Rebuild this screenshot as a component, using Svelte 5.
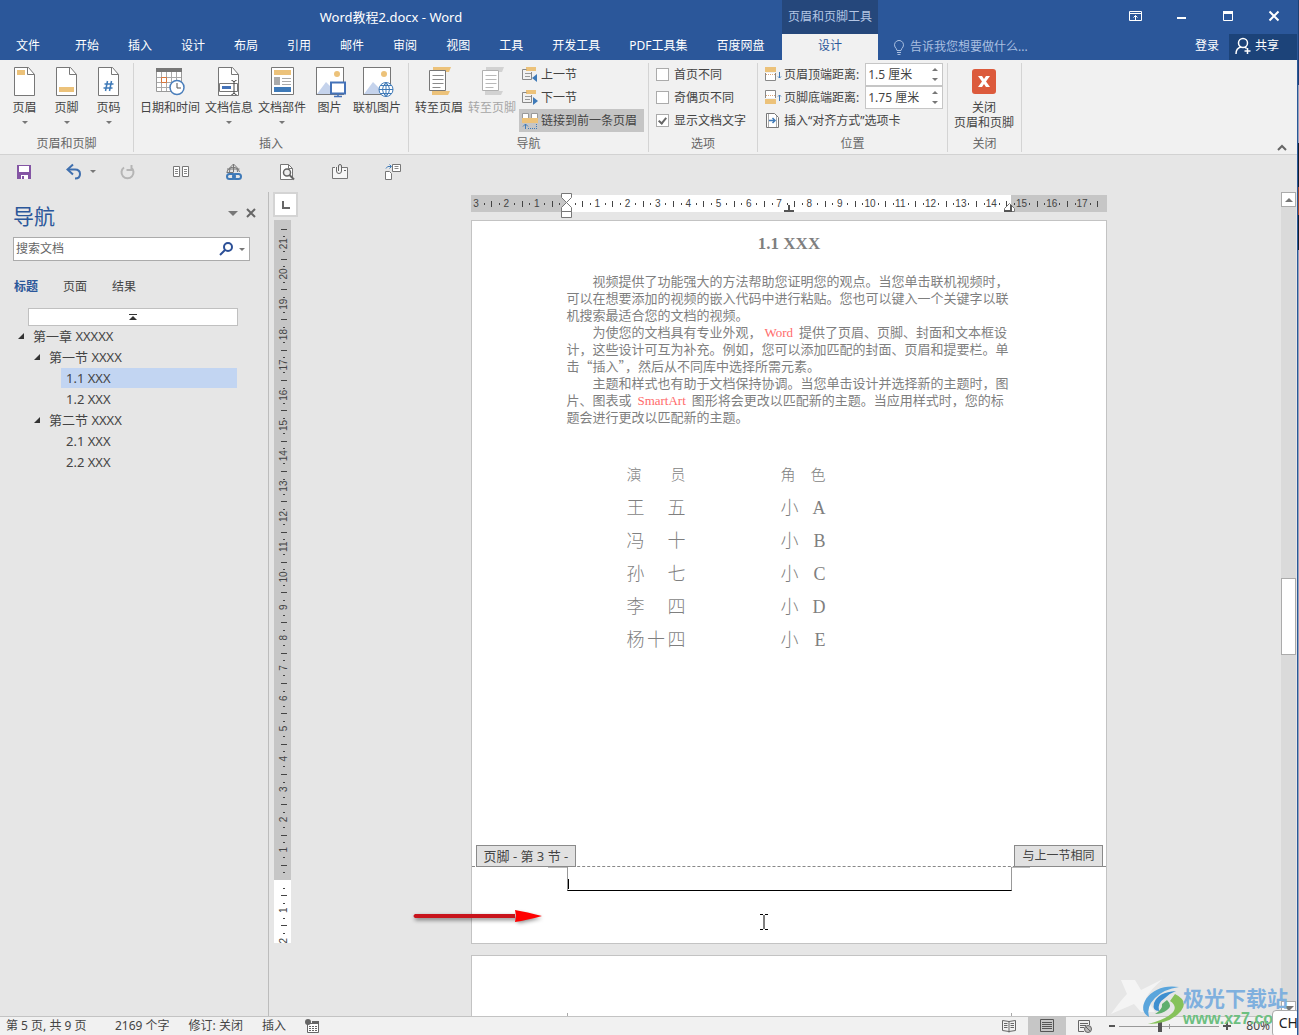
<script>
    const tabs = ["开始", "插入", "设计", "布局", "引用", "邮件", "审阅", "视图", "工具", "开发工具", "PDF工具集", "百度网盘"];

    const headerButtons = [
        { icon: "header", label: "页眉", menu: true },
        { icon: "footer", label: "页脚", menu: true },
        { icon: "number", label: "页码", menu: true }
    ];

    const insertButtons = [
        { icon: "date", label: "日期和时间" },
        { icon: "info", label: "文档信息", menu: true },
        { icon: "parts", label: "文档部件", menu: true },
        { icon: "picture", label: "图片" },
        { icon: "online", label: "联机图片" }
    ];

    const outline = [
        { level: 0, text: "第一章 XXXXX", open: true },
        { level: 1, text: "第一节 XXXX", open: true },
        { level: 2, text: "1.1 XXX" },
        { level: 2, text: "1.2 XXX" },
        { level: 1, text: "第二节 XXXX", open: true },
        { level: 2, text: "2.1 XXX" },
        { level: 2, text: "2.2 XXX" }
    ];

    const cast = [
        ["王 五", "小 A"],
        ["冯 十", "小 B"],
        ["孙 七", "小 C"],
        ["李 四", "小 D"],
        ["杨十四", "小 E"]
    ];

    // One centimetre on the rulers at 80% zoom
    const CM = 30.3;

    // Quarter marks between two bounds, zero is where the margin ends
    function ticks(from, to, zero) {
        const list = [];
        for (let q = from * 4; q <= to * 4; q++) {
            if (q === 0) continue;
            const kind = q % 4 === 0 ? "label" : q % 2 === 0 ? "bar" : "dot";
            list.push({ kind, at: zero + (q * CM) / 4, text: Math.abs(q / 4) });
        }
        return list;
    }

    const across = ticks(-3, 17.5, 96);
    const down = ticks(-21.5, 2, 660);

    let selected = $state(2);
    let differentFirst = $state(false);
    let differentOdd = $state(false);
    let showText = $state(true);
    let zoom = $state(80);
</script>

{#snippet page()}
    <path d="M3.5 1.5h14l6 7v21h-20z" fill="#fff" stroke="#777" />
    <path d="M16.5 1.5v7h7" fill="none" stroke="#777" />
{/snippet}

{#snippet photo()}
    <rect x="0.5" y="1.5" width="27" height="27" fill="#fff" stroke="#777" />
    <circle cx="21" cy="8" r="3" fill="#ecc27a" />
    <path d="M1 28l9-12 12 12z" fill="#c5d3ec" />
{/snippet}

{#snippet bigIcon(name)}
    <svg class="big-icon" viewBox="0 0 28 32" aria-hidden="true">
        {#if name === "header"}
            {@render page()}
            <path d="M6 4h8v5H6z" fill="#ecc27a" />
        {:else if name === "footer"}
            {@render page()}
            <path d="M6 21h15v5H6z" fill="#ecc27a" />
        {:else if name === "number"}
            {@render page()}
            <path d="M12.500 15l-2 10M16.500 15l-2 10M9.500 18h9M8.500 22h9" fill="none" stroke="#3f7ab8" stroke-width="1.500" />
        {:else if name === "date"}
            <path d="M0.500 2.500h25v23h-25z" fill="#fff" stroke="#999" />
            <path d="M0 2h26v4H0z" fill="#777" />
            <path d="M5.500 6v19M10.500 6v19M15.500 6v19M20.500 6v19M1 11.500h24M1 16.500h24M1 21.500h24" stroke="#aaa" />
            <path d="M5.500 11.500h5v5h-5z" fill="none" stroke="#d9773c" />
            <circle cx="21" cy="21.500" r="7" fill="#fff" stroke="#4a7ebb" stroke-width="1.500" />
            <path d="M21 17v5h4" fill="none" stroke="#555" />
        {:else if name === "info"}
            {@render page()}
            <path d="M4.500 17.500h18v8h-18z" fill="#fff" stroke="#777" />
            <path d="M7 20h9v3H7z" fill="#4472b8" />
            <path d="M16.500 14.500q2 0 2.500 1.500q.5-1.500 2.500-1.500M19 16v11M16.500 28.500q2 0 2.500-1.500q.5 1.500 2.500 1.500" fill="none" stroke="#444" />
        {:else if name === "parts"}
            <path d="M3.500 1.500h22v27h-22z" fill="#fff" stroke="#777" />
            <path d="M6 4h17v5H6z" fill="#ecc27a" />
            <path d="M6 11h6v8H6z" fill="#aaa" />
            <path d="M14 12.500h9M14 15.500h9M14 18.500h9" stroke="#aaa" />
            <path d="M6 21h17v5H6z" fill="#3f7ab8" />
        {:else if name === "picture"}
            {@render photo()}
            <path d="M15 16.500h14v11H15z" fill="#fff" stroke="#4472b8" stroke-width="2" />
            <path d="M22 28v2M18 30.500h8" stroke="#4472b8" stroke-width="1.500" />
        {:else if name === "online"}
            {@render photo()}
            <circle cx="23" cy="23.500" r="7" fill="#fff" stroke="#3f7ab8" />
            <path d="M16 23.500h14M23 16.500v14M17.500 19.500h11M17.500 27.500h11M23 16.500q-7 7 0 14q7-7 0-14" fill="none" stroke="#3f7ab8" />
        {:else if name === "goHeader" || name === "goFooter"}
            {@const off = name === "goFooter"}
            <path d="M8 1h18l-2 5H8zM7 25h18l-2 4H7z" fill={off ? "#d2d2d2" : "#ecc27a"} />
            <path d="M4.500 4.500h16v20h-16z" fill="#fff" stroke={off ? "#b0b0b0" : "#777"} />
            <path d="M7.500 9.500h11M7.500 13.500h11M7.500 17.500h11M7.500 21.500h8" stroke={off ? "#b8b8b8" : "#8a8a8a"} />
        {:else if name === "close"}
            <rect x="2" y="3" width="24" height="25" rx="3" fill="#dc5a3c" />
            <path d="M8 10h4l2 3 2-3h4l-4 5.500 4 5.500h-4l-2-3-2 3H8l4-5.500z" fill="#fff" />
        {/if}
    </svg>
{/snippet}

{#snippet bigButton(icon, label, menu, disabled)}
    <button type="button" class="big" {disabled}>
        {@render bigIcon(icon)}
        <span>{label}</span>
        {#if menu}<i class="caret"></i>{/if}
    </button>
{/snippet}

{#snippet smallIcon(name)}
    <svg class="small-icon" viewBox="0 0 16 16" aria-hidden="true">
        {#if name === "prev" || name === "next"}
            <path d="M4 0h10v4H4z" fill="#ecc27a" />
            <path d="M4.500 2.500H.5v10h9V5" fill="none" stroke="#888" />
            <path d="M3 6.500h6M3 9.500h5" stroke="#999" />
            <path d={name === "prev" ? "M15 7v8l-5-4z" : "M11 7v8l5-4z"} fill="#3f7ab8" />
        {:else if name === "link"}
            <path d="M.5.5h6v5h-6zM9.500.5h6v5h-6z" fill="#fff" stroke="#999" />
            <path d="M0 5h16v5H0z" fill="#ecc27a" />
            <path d="M3.500 16v-5M1 13.500l2.500-2.500 2.500 2.500" fill="none" stroke="#3f7ab8" />
            <path d="M6 15.500h9M14.500 11v4" stroke="#3f7ab8" stroke-dasharray="1 1" />
        {:else if name === "top" || name === "bottom"}
            <path d={name === "top" ? "M.5 6v7.500h10V6" : "M.5 8V.5h10V8"} fill="#fff" stroke="#888" />
            <path d={name === "top" ? "M0 0h11v5H0z" : "M0 9h11v5H0z"} fill="#ecc27a" />
            <path d={name === "top" ? "M1 7.500h9" : "M1 5.500h9"} stroke="#d9a57c" stroke-dasharray="1 1" />
            <path d={name === "top" ? "M14.500 5v6M13 9.500l1.500 1.500 1.500-1.500" : "M14.500 11V5M13 6.500l1.500-1.500 1.500 1.500"} fill="none" stroke="#3f7ab8" />
        {:else if name === "align"}
            <path d="M1.500.5h8l4 4v10h-12z" fill="#fff" stroke="#777" />
            <path d="M3.500 1v13M11.500 3v11" stroke="#aaa" />
            <path d="M4 7.500h6M7.500 5l2.500 2.500-2.500 2.500" fill="none" stroke="#3f7ab8" stroke-width="1.500" />
        {/if}
    </svg>
{/snippet}

<div class="app">
    <header>
        <div class="title">Word教程2.docx - Word</div>
        <div class="context">页眉和页脚工具</div>
        <div class="window">
            <button type="button" aria-label="功能区显示选项">
                <svg viewBox="0 0 14 14"><path d="M.5 2.500h12v9H.5zM.5 4.500h12M6.500 11V6.500M4.500 8.500l2-2 2 2" fill="none" stroke="#fff" /></svg>
            </button>
            <button type="button" aria-label="最小化">
                <svg viewBox="0 0 14 14"><path d="M2 8h9v2H2z" fill="#fff" /></svg>
            </button>
            <button type="button" aria-label="最大化">
                <svg viewBox="0 0 14 14"><path d="M2.500 2.500h9v9h-9z" fill="none" stroke="#fff" /><path d="M2 2h10v3H2z" fill="#fff" /></svg>
            </button>
            <button type="button" aria-label="关闭窗口">
                <svg viewBox="0 0 14 14"><path d="M2.500 2.500l9 9M11.500 2.500l-9 9" stroke="#fff" stroke-width="2" /></svg>
            </button>
        </div>
        <nav class="tabs">
            <button type="button" class="file">文件</button>
            {#each tabs as tab}
                <button type="button">{tab}</button>
            {/each}
        </nav>
        <button type="button" class="active-tab">设计</button>
        <div class="account">
            <button type="button" class="tell">
                <svg viewBox="0 0 12 16"><path d="M4 11.500Q3.500 9.500 2 8A4.500 4.500 0 1 1 10 8Q8.500 9.500 8 11.500zM4 13.500h4M4.500 15.500h3" fill="none" stroke="#a9bfe0" /></svg>
                告诉我您想要做什么...
            </button>
            <button type="button" class="login">登录</button>
            <button type="button" class="share">
                <svg viewBox="0 0 16 18"><circle cx="8" cy="6" r="4.500" fill="none" stroke="#fff" stroke-width="1.500" /><path d="M1 17q0-6 5-7M10 10l1.500 1.500M12.500 11v6M9.500 14h6" fill="none" stroke="#fff" stroke-width="1.500" /></svg>
                共享
            </button>
        </div>
    </header>

    <div class="ribbon">
        <section>
            <div class="tools">
                {#each headerButtons as b}
                    {@render bigButton(b.icon, b.label, b.menu)}
                {/each}
            </div>
            <h2>页眉和页脚</h2>
        </section>
        <section>
            <div class="tools">
                {#each insertButtons as b}
                    {@render bigButton(b.icon, b.label, b.menu)}
                {/each}
            </div>
            <h2>插入</h2>
        </section>
        <section>
            <div class="tools">
                {@render bigButton("goHeader", "转至页眉", false)}
                {@render bigButton("goFooter", "转至页脚", false, true)}
                <div class="stack">
                    <button type="button">{@render smallIcon("prev")}上一节</button>
                    <button type="button">{@render smallIcon("next")}下一节</button>
                    <button type="button" class="pressed">{@render smallIcon("link")}链接到前一条页眉</button>
                </div>
            </div>
            <h2>导航</h2>
        </section>
        <section>
            <div class="tools stack">
                <label><input type="checkbox" bind:checked={differentFirst} />首页不同</label>
                <label><input type="checkbox" bind:checked={differentOdd} />奇偶页不同</label>
                <label><input type="checkbox" bind:checked={showText} />显示文档文字</label>
            </div>
            <h2>选项</h2>
        </section>
        <section>
            <div class="tools stack position">
                <div class="field">
                    {@render smallIcon("top")}
                    <label for="top">页眉顶端距离:</label>
                    <span class="spin"><input id="top" value="1.5 厘米" /><span><i class="up"></i><i class="caret"></i></span></span>
                </div>
                <div class="field">
                    {@render smallIcon("bottom")}
                    <label for="bottom">页脚底端距离:</label>
                    <span class="spin"><input id="bottom" value="1.75 厘米" /><span><i class="up"></i><i class="caret"></i></span></span>
                </div>
                <button type="button">{@render smallIcon("align")}插入“对齐方式”选项卡</button>
            </div>
            <h2>位置</h2>
        </section>
        <section>
            <div class="tools">
                <button type="button" class="big">
                    {@render bigIcon("close")}
                    <span>关闭<br />页眉和页脚</span>
                </button>
            </div>
            <h2>关闭</h2>
        </section>
        <button type="button" class="collapse" aria-label="折叠功能区">
            <svg viewBox="0 0 10 8"><path d="M1 7l4-4 4 4" fill="none" stroke="#666" stroke-width="2" /></svg>
        </button>
    </div>

    <div class="quick">
        <button type="button" aria-label="保存">
            <svg viewBox="0 0 18 18"><path d="M2 2h14v14H2z" fill="#8455a4" /><path d="M4 3h10v6H4zM6 12h7v4H6z" fill="#fff" /><path d="M7 13h2v3H7z" fill="#8455a4" /></svg>
        </button>
        <button type="button" aria-label="撤消">
            <svg viewBox="0 0 18 18"><path d="M3 6.500h7q5 0 5 4.500t-5 4.500" fill="none" stroke="#3f6fae" stroke-width="2" /><path d="M8 1.500L2.500 6.500 8 11.500" fill="none" stroke="#3f6fae" stroke-width="2" /></svg>
            <i class="caret"></i>
        </button>
        <button type="button" aria-label="重复">
            <svg viewBox="0 0 18 18"><path d="M5 4.500a6 6 0 1 0 7 0M12.500 2v5h-5" fill="none" stroke="#b5b5b5" stroke-width="2" /></svg>
        </button>
        <button type="button" aria-label="双页">
            <svg viewBox="0 0 18 18"><path d="M1.500 3.500h6v10h-6zM10.500 3.500h6v10h-6z" fill="#fff" stroke="#777" /><path d="M3 6.500h3M3 8.500h3M3 10.500h3M12 6.500h3M12 8.500h3M12 10.500h3" stroke="#888" /></svg>
        </button>
        <button type="button" aria-label="超链接">
            <svg viewBox="0 0 18 18"><path d="M2 9a6.500 6.500 0 0 1 12.500 0M8.500 1v8M2 6h12.500M1.500 9.500h7M8.500 1q-5 3-4 8M8.500 1q5 3 4 8" fill="none" stroke="#777" /><rect x="2" y="11" width="8" height="5" rx="2.500" fill="none" stroke="#3f7ab8" stroke-width="2" /><rect x="8" y="11" width="8" height="5" rx="2.500" fill="none" stroke="#3f7ab8" stroke-width="2" /></svg>
        </button>
        <button type="button" aria-label="打印预览">
            <svg viewBox="0 0 18 18"><path d="M2.500 1.500h8l4 4v11h-12z" fill="#fff" stroke="#777" /><path d="M10.500 1.500v4h4" fill="none" stroke="#777" /><circle cx="9" cy="9.500" r="3.500" fill="#eee" stroke="#666" stroke-width="1.500" /><path d="M11.500 12l4.500 4.500" stroke="#666" stroke-width="2" /></svg>
        </button>
        <button type="button" aria-label="附件">
            <svg viewBox="0 0 18 18"><path d="M4 4.500H1.500v11h15v-11H11" fill="#f6f6f6" stroke="#777" /><path d="M5.500 4v4a2.500 2.500 0 0 0 5 0V3a1.500 1.500 0 0 0-3 0v5M13 7.500h2" fill="none" stroke="#666" /></svg>
        </button>
        <button type="button" aria-label="发送">
            <svg viewBox="0 0 18 18"><path d="M8.500 1.500h8v7h-8z" fill="#fff" stroke="#777" /><path d="M10.500 3.500h4M10.500 5.500h4" stroke="#888" /><path d="M1.500 8.500h4l2 2v6h-6z" fill="#fff" stroke="#777" /><path d="M2 5.500q1-3 5-2M5.500 1.500l2 2-2 2" fill="none" stroke="#3f7ab8" /></svg>
        </button>
    </div>

    <div class="work">
        <aside>
            <div class="pane-title">
                <h1>导航</h1>
                <button type="button" aria-label="窗格选项"><i class="caret wide"></i></button>
                <button type="button" aria-label="关闭窗格">
                    <svg viewBox="0 0 10 10"><path d="M1 1l8 8M9 1l-8 8" stroke="#666" stroke-width="2" /></svg>
                </button>
            </div>
            <div class="search">
                <input type="text" placeholder="搜索文档" aria-label="搜索文档" />
                <svg viewBox="0 0 14 14"><circle cx="9" cy="5" r="4" fill="none" stroke="#2b4f96" stroke-width="2" /><path d="M6 8l-5 5" stroke="#2b4f96" stroke-width="2" /></svg>
                <i class="caret"></i>
            </div>
            <div class="pane-tabs">
                <button type="button" class="on">标题</button>
                <button type="button">页面</button>
                <button type="button">结果</button>
            </div>
            <button type="button" class="jump" aria-label="跳转到开头">
                <svg viewBox="0 0 8 6"><path d="M0 0h8v1H0zM4 2l4 4H0z" fill="#333" /></svg>
            </button>
            <ul>
                {#each outline as item, i}
                    <li class="level{item.level}">
                        <button type="button" class:selected={selected === i} onclick={() => (selected = i)}>
                            {#if item.open}
                                <svg viewBox="0 0 8 8"><path d="M7 1v6H1z" fill="#333" /></svg>
                            {/if}
                            {item.text}
                        </button>
                    </li>
                {/each}
            </ul>
        </aside>

        <div class="side-ruler">
            <button type="button" class="tab-kind" aria-label="制表符">
                <svg viewBox="0 0 8 8"><path d="M1 0v7h7" fill="none" stroke="#666" stroke-width="2" /></svg>
            </button>
            <svg class="ruler-y" viewBox="0 0 17 723" aria-hidden="true">
                <path d="M0 0h17v660H0z" fill="#c6c6c6" />
                <path d="M0 660h17v63H0z" fill="#fff" />
                {#each down as t}
                    {#if t.kind === "label"}
                        <text transform="translate(13 {t.at}) rotate(-90)">{t.text}</text>
                    {:else if t.kind === "bar"}
                        <rect x="7" y={Math.round(t.at)} width="6" height="1" />
                    {:else}
                        <rect x="9" y={Math.round(t.at)} width="2" height="1" />
                    {/if}
                {/each}
            </svg>
        </div>

        <main>
            <svg class="ruler-x" viewBox="0 0 636 26" aria-hidden="true">
                <path d="M0 2h636v17H0z" fill="#c6c6c6" />
                <path d="M96 2h444v17H96z" fill="#fff" />
                {#each across as t}
                    {#if t.kind === "label"}
                        <text x={t.at} y="14">{t.text}</text>
                    {:else if t.kind === "bar"}
                        <rect x={Math.round(t.at)} y="8" width="1" height="6" />
                    {:else}
                        <rect x={Math.round(t.at)} y="10" width="1" height="2" />
                    {/if}
                {/each}
                <path d="M90.500.5h10v4l-5 5-5-5zM95.500 9.500l5 5v4h-10v-4zM90.500 18.500h10v6h-10z" fill="#fff" stroke="#777" />
                <path d="M313 18h10M318 12v6" stroke="#555" stroke-width="2" />
                <path d="M533.500 18.500v-3l5-5 5 5v3z" fill="#fff" stroke="#777" />
                <path d="M533 18h7V12" fill="none" stroke="#555" stroke-width="2" />
            </svg>
            <article>
                <div class="text">
                    <h3>1.1 XXX</h3>
                    <p>
                        视频提供了功能强大的方法帮助您证明您的观点。当您单击联机视频时，<br />
                        可以在想要添加的视频的嵌入代码中进行粘贴。您也可以键入一个关键字以联<br />
                        机搜索最适合您的文档的视频。
                    </p>
                    <p>
                        为使您的文档具有专业外观，<em>Word</em> 提供了页眉、页脚、封面和文本框设<br />
                        计，这些设计可互为补充。例如，您可以添加匹配的封面、页眉和提要栏。单<br />
                        击“插入”，然后从不同库中选择所需元素。
                    </p>
                    <p>
                        主题和样式也有助于文档保持协调。当您单击设计并选择新的主题时，图<br />
                        片、图表或 <em>SmartArt</em> 图形将会更改以匹配新的主题。当应用样式时，您的标<br />
                        题会进行更改以匹配新的主题。
                    </p>
                    <table>
                        <thead>
                            <tr><th>演 员</th><th>角 色</th></tr>
                        </thead>
                        <tbody>
                            {#each cast as [actor, role]}
                                <tr><td>{actor}</td><td>{role}</td></tr>
                            {/each}
                        </tbody>
                    </table>
                </div>
                <footer class="page-footer">
                    <span class="flag">页脚 - 第 3 节 -</span>
                    <span class="flag right">与上一节相同</span>
                    <div class="line"></div>
                    <svg class="ibeam" viewBox="0 0 8 16"><path d="M0 .5h3M5 .5h3M0 15.500h3M5 15.500h3M4 1v14" stroke="#000" /></svg>
                    <svg class="arrow" viewBox="0 0 136 24">
                        <g class="shadow"><path d="M4 12h103V9l24 5-24 5v-3H4z" fill="#000" /></g>
                        <path d="M4 10h100v4H4q-3-2 0-4z" fill="#c8141c" />
                        <path d="M104 6q12 2 27 6-15 4-27 6l1-6z" fill="#f00" />
                    </svg>
                </footer>
            </article>
            <article class="next"></article>
        </main>

        <div class="scroll">
            <button type="button" aria-label="向上滚动"><i class="up wide"></i></button>
            <div class="thumb"></div>
            <button type="button" aria-label="向下滚动"><i class="caret wide"></i></button>
        </div>
    </div>

    <div class="status">
        <span class="pages">第 5 页, 共 9 页</span>
        <span>2169 个字</span>
        <span>修订: 关闭</span>
        <span>插入</span>
        <button type="button" class="macro" aria-label="录制宏">
            <svg viewBox="0 0 14 14"><path d="M2.500 4.500h11v9h-11z" fill="#fff" stroke="#666" /><path d="M7 2h7v3H7zM4 7h2v1H4zM7 7h2v1H7zM10 7h2v1h-2zM4 9h2v1H4zM7 9h2v1H7zM10 9h2v1h-2zM4 11h2v1H4zM7 11h2v1H7zM10 11h2v1h-2z" fill="#666" /><circle cx="3" cy="3" r="3" fill="#666" /></svg>
        </button>
        <div class="views">
            <button type="button" aria-label="阅读视图">
                <svg viewBox="0 0 14 14"><path d="M.5 1.500l6.500 1 6.500-1v10l-6.500 1-6.500-1zM7 2.500v11M2 4.500h3.500M2 6.500h3.500M2 8.500h3.500M8.500 4.500H12M8.500 6.500H12M8.500 8.500H12" fill="none" stroke="#666" /></svg>
            </button>
            <button type="button" class="on" aria-label="页面视图">
                <svg viewBox="0 0 14 14"><path d="M.5.5h13v12H.5zM2 3.500h10M2 5.500h10M2 7.500h10M2 9.500h10" fill="none" stroke="#555" /></svg>
            </button>
            <button type="button" aria-label="Web 版式视图">
                <svg viewBox="0 0 14 14"><path d="M6 12.500H.5V1.500h11V6M2 4.500h8M2 6.500h6M2 8.500h4" fill="none" stroke="#666" /><circle cx="10" cy="10" r="3.500" fill="#bbb" stroke="#666" /><path d="M8 8l4 4" stroke="#666" /></svg>
            </button>
        </div>
        <button type="button" class="step" aria-label="缩小">
            <svg viewBox="0 0 8 8"><path d="M1 3h6v2H1z" fill="#555" /></svg>
        </button>
        <input type="range" min="10" max="185" bind:value={zoom} aria-label="显示比例" />
        <button type="button" class="step" aria-label="放大">
            <svg viewBox="0 0 8 8"><path d="M0 3h8v2H0zM3 0h2v8H3z" fill="#555" /></svg>
        </button>
        <button type="button" class="percent">{zoom}%</button>
    </div>

    <div class="stamp">
        <svg viewBox="0 0 80 50" aria-hidden="true">
            <path d="M12 2h14l6 10L54 1q-12 10-17 19l9 14H32l-7-8L2 36q10-14 16-20z" fill="#f8f8f8" opacity="0.8" />
            <path d="M70 9Q48 6 37 21q-7 12 3 18-3-10 6-19 9-9 24-11z" fill="#5aa5dc" />
            <path d="M67 13q-18 1-22 12-2 8 5 8-2-8 6-13 5-5 11-7z" fill="#3f8fd0" />
            <path d="M66 16q14 7 6 17-11 13-33 13 16-4 23-10 8-7-1-13z" fill="#86c25a" />
            <path d="M58 22q6 6 0 10-5 4-12 4 8-5 7-10z" fill="#5fae6e" />
        </svg>
        <div>
            <strong>极光下载站</strong>
            <span>www.xz7.com</span>
        </div>
    </div>
    <div class="ime">CH</div>
</div>

<style>
    :global(body) {
        margin: 0;
        background: linear-gradient(#1d4173 85px, #93a4b8 85px, #93a4b8 143px, #10202e 143px, #10202e 187px, #a04a2c 187px, #a04a2c 215px, #10202e 215px, #10202e 250px, #93a4b8 250px);
    }

    .app {
        position: relative;
        display: flex;
        flex-direction: column;
        height: 100vh;
        margin-right: 1px;
        overflow: hidden;
        box-sizing: border-box;
        border-right: 1px solid #2b579a;
        background: #e6e6e6;
        color: #444;
        font: 12px/16px "Noto Sans", "Noto Sans CJK SC", sans-serif;
    }

    button, input {
        margin: 0;
        padding: 0;
        border: none;
        background: none;
        color: inherit;
        font: inherit;
    }

    button {
        display: flex;
        align-items: center;
        justify-content: center;
        white-space: nowrap;
    }

    svg {
        display: block;
        flex: none;
        overflow: visible;
    }

    h1, h2, h3, p, ul {
        margin: 0;
        padding: 0;
        font-weight: normal;
    }

    .caret, .up {
        border: 3px solid transparent;
        border-top-color: #777;
        border-bottom: none;
    }

    .up {
        border-top: none;
        border-bottom: 3px solid #777;
    }

    .wide {
        border-width: 5px;
        border-top-width: 5px;
        border-bottom-width: 0;
    }

    .up.wide {
        border-width: 0 4px 4px;
    }

    header {
        display: grid;
        grid-template-columns: 782px 96px 1fr;
        grid-template-rows: 34px 26px;
        background: #2b579a;
        color: #fff;
    }

    .title {
        align-self: center;
        text-align: center;
        font-size: 13px;
    }

    .context {
        display: flex;
        align-items: center;
        justify-content: center;
        background: #25477b;
        color: #b4c6e4;
    }

    .window {
        display: flex;
        align-items: center;
        justify-content: flex-end;
        gap: 32px;
        padding: 0 16px 2px 0;

        & svg {
            width: 14px;
            height: 14px;
        }
    }

    .tabs {
        display: flex;
        gap: 29px;
        padding: 0 0 2px 16px;

        & .file {
            margin-right: 6px;
        }
    }

    .active-tab {
        padding-bottom: 2px;
        background: #f1f1f1;
        color: #2b579a;
    }

    .account {
        display: flex;
        align-items: stretch;
    }

    .tell {
        gap: 5px;
        margin-right: auto;
        padding-left: 15px;
        color: #a9bfe0;

        & svg {
            width: 12px;
            height: 16px;
        }
    }

    .login {
        padding: 0 10px 2px;
    }

    .share {
        gap: 4px;
        padding: 0 18px 3px 6px;
        background: #1c4379;

        & svg {
            width: 16px;
            height: 18px;
        }
    }

    .ribbon {
        display: grid;
        grid-template-columns: 134px 275px 240px 109px 190px 74px 1fr;
        padding: 3px 0 2px;
        border-bottom: 1px solid #d2d2d2;
        background: #f1f1f1;

        & section {
            display: flex;
            flex-direction: column;
            border-right: 1px solid #d4d4d4;
        }

        & h2 {
            font-size: 12px;
            line-height: 16px;
            text-align: center;
            color: #666;
        }
    }

    .tools {
        display: flex;
        gap: 1px;
        height: 73px;
        padding: 0 4px;
    }

    .big {
        flex-direction: column;
        justify-content: flex-start;
        min-width: 41px;
        padding: 3px 2px 0;

        & > span {
            line-height: 15px;
            margin-top: 2px;
        }

        & .caret {
            margin-top: 6px;
        }

        &:disabled {
            color: #a6a6a6;
        }
    }

    .big-icon {
        width: 28px;
        height: 32px;
    }

    .small-icon {
        width: 16px;
        height: 16px;
    }

    .stack {
        display: flex;
        flex-direction: column;
        align-items: stretch;
        gap: 0;

        & > * {
            display: flex;
            align-items: center;
            justify-content: flex-start;
            height: 23px;
            gap: 3px;
        }

        & > button {
            padding: 0 7px 0 3px;
        }
    }

    .stack .pressed {
        background: #c5c5c5;
    }

    .tools.stack {
        padding: 0 7px;

        & > label {
            gap: 5px;
        }
    }

    .tools.position > button {
        padding: 0;
    }

    input[type="checkbox"] {
        appearance: none;
        width: 13px;
        height: 13px;
        box-sizing: border-box;
        border: 1px solid #ababab;
        background: #fff;

        &:checked::before {
            content: "";
            display: block;
            width: 3px;
            height: 6px;
            margin: 1px 0 0 3px;
            border: solid #666;
            border-width: 0 2px 2px 0;
            transform: rotate(40deg);
        }
    }

    .spin {
        display: flex;
        flex: 1;
        align-items: stretch;
        box-sizing: border-box;
        height: 23px;
        margin: 0 -3px 0 3px;
        border: 1px solid #c6c6c6;
        background: #fff;

        & input {
            flex: 1;
            width: 10px;
            padding-left: 2px;
            font-size: 12px;
        }

        & > span {
            display: flex;
            flex-direction: column;
            justify-content: space-between;
            padding: 4px;
        }
    }

    .collapse {
        justify-self: end;
        align-self: end;
        padding: 1px 10px;

        & svg {
            width: 10px;
            height: 8px;
        }
    }

    .quick {
        display: flex;
        align-items: center;
        gap: 35px;
        height: 33px;
        padding-left: 15px;

        & svg {
            width: 18px;
            height: 18px;
        }

        & button {
            gap: 7px;
        }

        & button:first-child {
            margin-right: -3px;
        }

        & button:nth-child(2) {
            margin-right: -12px;
        }
    }

    .work {
        display: flex;
        flex: 1;
        min-height: 0;
        padding-top: 4px;
    }

    aside {
        display: flex;
        flex-direction: column;
        width: 268px;
        border-right: 1px solid #bcbcbc;
    }

    .pane-title {
        display: flex;
        align-items: center;
        gap: 8px;
        padding: 10px 12px 6px 13px;

        & h1 {
            flex: 1;
            font-size: 21px;
            line-height: 29px;
            color: #2b579a;
        }

        & svg {
            width: 10px;
            height: 10px;
        }

        & button {
            height: 22px;
            align-self: flex-start;
        }
    }

    .search {
        display: flex;
        align-items: center;
        height: 22px;
        margin: 0 18px 0 13px;
        padding-right: 4px;
        border: 1px solid #ababab;
        background: #fff;

        & input {
            flex: 1;
            padding-left: 2px;
            outline: none;
        }

        & input::placeholder {
            color: #666;
        }

        & svg {
            width: 14px;
            height: 14px;
            margin-right: 6px;
        }
    }

    .pane-tabs {
        display: flex;
        gap: 25px;
        padding: 18px 14px 13px;

        & .on {
            font-weight: bold;
            color: #2b579a;
        }
    }

    .jump {
        height: 18px;
        margin: 0 30px 0 28px;
        border: 1px solid #c0c0c0;
        background: #fff;

        & svg {
            width: 8px;
            height: 6px;
        }
    }

    ul {
        list-style: none;
        padding-right: 31px;

        & button {
            width: 100%;
            height: 20px;
            justify-content: flex-start;
            gap: 8px;
            padding: 0 0 1px 5px;
            font-size: 13px;
        }

        & svg {
            width: 8px;
            height: 8px;
        }

        & .selected {
            background: #c2d5f2;
        }
    }

    li {
        height: 21px;
        overflow: hidden;
    }

    .level0 {
        padding-left: 12px;
    }

    .level1 {
        padding-left: 28px;
    }

    .level2 {
        padding-left: 61px;
    }

    .side-ruler {
        width: 29px;
        padding-left: 4px;
    }

    .tab-kind {
        width: 25px;
        height: 25px;
        border: 2px solid #d4d4d4;
        background: #fff;

        & svg {
            width: 8px;
            height: 8px;
        }
    }

    .ruler-y {
        width: 17px;
        height: 723px;
        margin: 3px 0 0 1px;
    }

    .ruler-x {
        width: 636px;
        height: 26px;
        margin: 1px 0;
    }

    .ruler-x, .ruler-y {
        fill: #444;

        & text {
            font: 10px "Liberation Sans", Arial, sans-serif;
            text-anchor: middle;
        }
    }

    main {
        display: flex;
        flex: 1;
        flex-direction: column;
        align-items: center;
        min-width: 0;
        padding-right: 6px;
        overflow: hidden;
    }

    article {
        display: flex;
        flex: none;
        flex-direction: column;
        box-sizing: border-box;
        width: 636px;
        min-height: 724px;
        border: 1px solid #c3c3c3;
        background: #fff;
        color: #7f7f7f;
        font: 300 13px/17px "Noto Sans CJK SC", sans-serif;

        /* Margin corners of the following page */
        &.next {
            margin-top: 11px;
            background:
                linear-gradient(#aaa, #aaa) 95px 57px / 1px 20px no-repeat,
                linear-gradient(#aaa, #aaa) 539px 57px / 1px 20px no-repeat,
                #fff;
        }
    }

    .text {
        flex: 1;
        padding: 12px 94px 0 95px;

        & h3 {
            margin-bottom: 18px;
            font: bold 17px/21px "Liberation Serif", "Times New Roman", serif;
            text-align: center;
        }

        & p {
            white-space: nowrap;
            text-indent: 26px;
        }

        & em {
            margin: 0 3px;
            font: 13px/13px "Liberation Serif", "Times New Roman", serif;
            color: #ff6b6b;
        }
    }

    table {
        margin: 34px 0 0 60px;
        border-collapse: collapse;

        & th, & td {
            width: 59px;
            height: 33px;
            padding: 0 95px 0 0;
            font-size: 18px;
            font-weight: 300;
            font-family: "Liberation Serif", "Noto Sans CJK SC", serif;
            line-height: 33px;
            text-align: left;
            text-align-last: justify;
            white-space: nowrap;
        }

        & th {
            font-size: 15px;
        }

        & th:last-child, & td:last-child {
            width: 45px;
            padding: 0;
        }
    }

    .page-footer {
        position: relative;
        height: 76px;
        padding: 0 94px 0 95px;
        border-top: 1px dashed #888;
        background:
            linear-gradient(#bbb, #bbb) 76px 0 / 19px 1px no-repeat,
            linear-gradient(#bbb, #bbb) 540px 0 / 18px 1px no-repeat;
    }

    .line {
        box-sizing: border-box;
        height: 24px;
        padding-top: 12px;
        border-bottom: 1px solid #000;
        border-left: 1px solid #999;
        border-right: 1px solid #999;
    }

    .line::before {
        content: "";
        display: block;
        width: 1px;
        height: 10px;
        background: #000;
    }

    .flag {
        position: absolute;
        bottom: 76px;
        left: 4px;
        min-width: 86px;
        box-sizing: border-box;
        padding: 2px 7px;
        border: 1px solid #8a8a8a;
        background: #e1e1e1;
        color: #444;
        font: 13px/16px "Noto Sans", "Noto Sans CJK SC", sans-serif;

        &.right {
            right: 3px;
            left: auto;
            font-size: 12px;
        }
    }

    .ibeam {
        position: absolute;
        top: 47px;
        left: 288px;
        width: 8px;
        height: 16px;
    }

    .arrow {
        position: absolute;
        top: 37px;
        left: -61px;
        width: 136px;
        height: 24px;
    }

    .shadow {
        opacity: 0.5;
        filter: blur(2px);
    }

    .scroll {
        display: flex;
        flex-direction: column;
        width: 15px;
        margin-right: 1px;
        background: #dadada;

        & button, & .thumb {
            box-sizing: border-box;
            height: 15px;
            border: 1px solid #ababab;
            background: #fff;
        }

        & .thumb {
            height: 77px;
            margin: 371px 0 auto;
        }
    }

    .status {
        display: flex;
        align-items: center;
        height: 18px;
        gap: 19px;
        padding: 0 27px 0 6px;
        border-top: 1px solid #c3c3c3;
        background: #f1f1f1;

        & svg {
            width: 14px;
            height: 14px;
        }

        & .step svg {
            width: 8px;
            height: 8px;
        }

        & .pages {
            min-width: 90px;
        }

        & .percent {
            margin-left: 12px;
        }
    }

    .views {
        display: flex;
        align-self: stretch;
        margin-left: auto;

        & button {
            width: 38px;
        }

        & .on {
            background: #c6c6c6;
        }
    }

    .step {
        margin: 0 -16px 0 -15px;
    }

    input[type="range"] {
        appearance: none;
        width: 100px;
        height: 16px;
        background: linear-gradient(#999, #999) center / 100% 1px no-repeat, linear-gradient(#999, #999) center / 1px 5px no-repeat;

        &::-webkit-slider-thumb {
            appearance: none;
            width: 4px;
            height: 11px;
            background: #555;
        }
    }

    .stamp {
        position: absolute;
        right: 9px;
        bottom: 7px;
        display: flex;
        align-items: flex-end;
        pointer-events: none;

        & svg {
            width: 80px;
            height: 50px;
            margin-right: -6px;
        }

        & div {
            display: flex;
            flex-direction: column;
        }

        & strong {
            font: bold 21px/26px "Noto Sans CJK SC", sans-serif;
            color: #7fb0de;
        }

        & span {
            font: bold 16px/18px "Liberation Sans", Arial, sans-serif;
            color: #6cbf80;
        }
    }

    .ime {
        position: absolute;
        right: -3px;
        bottom: -2px;
        padding: 4px 1px 5px 6px;
        border: 1px solid #aaa;
        border-radius: 4px;
        background: #fff;
        color: #222;
        font-size: 14px;
    }
</style>
